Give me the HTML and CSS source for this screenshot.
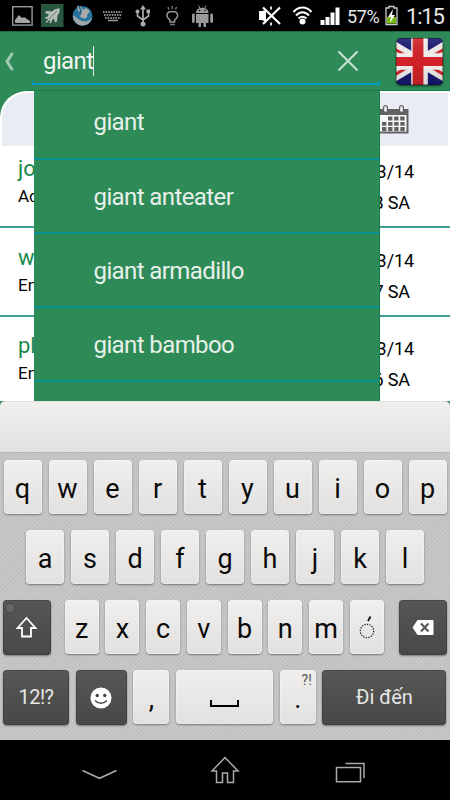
FILE: index.html
```
<!DOCTYPE html>
<html lang="vi">

<head>
    <meta charset="UTF-8" />
    <meta name="viewport" content="width=device-width, initial-scale=1.0" />
    <title>Dictionary</title>
    <link rel="stylesheet" href="styles.css">
</head>

<body>
    <div class="phone">
        <div class="status-bar">
            <svg class="status-left" width="225" height="31" viewBox="0 0 225 31">
                <!-- picture -->
                <rect x="12.7" y="6.7" width="19.4" height="18.4" fill="none" stroke="#999" stroke-width="1.4" />
                <path d="M15 23v-3l4-5 3 3 2-1 6 4v2z" fill="#a5a5a5" />
                <!-- plane -->
                <rect x="41" y="4" width="22.500" height="23" fill="#28573f" />
                <path d="M59.500 8l-5 1.500-2.500 2-6-.5-1 2 4 1.500-3 4 2 .5 2.500 2.500 3.500-3 1 4 2-1 .5-6 2-3z" fill="#b8bdb9" />
                <path d="M45 18.500l2-1.500M46 22.500l3-3M50 23l1.500-2" stroke="#b8bdb9" stroke-width="1.300" />
                <path d="M57 11l-8 8" stroke="#4c6f5b" stroke-width=".8" />
                <!-- globe -->
                <circle cx="82.500" cy="16" r="10" fill="#26749d" />
                <path d="M73 15c0 6 4 10 9 10.500 5 0 9-3 10-8-3 4-7 5-11 3-3-1-5-3-8-5.500z" fill="#a3a7a9" />
                <path d="M77 6c3-1 5 1 6 4l3-2 4 3-3 4c1 3-2 4-5 3-3-2-3-4-1-6l-3-1z" fill="#a9a9a9" />
                <path d="M79 6l2 5-1 4" stroke="#155f89" stroke-width="1.500" fill="none" />
                <!-- keyboard -->
                <path d="M103 12h19M104 15h18M105 18h16" stroke="#888" stroke-width="1.800" stroke-dasharray="1.600 1" />
                <path d="M108 20.500h10" stroke="#999" stroke-width="1.500" />
                <!-- usb -->
                <path d="M143 8v16M137.500 12v4l5.500 4M148.500 13v3l-5.500 4" stroke="#aaa" stroke-width="1.700" fill="none" />
                <path d="M140 9.500l3-4.500 3 4.500z" fill="#aaa" />
                <circle cx="143" cy="24" r="2.500" fill="#aaa" />
                <circle cx="137.500" cy="11.500" r="2" fill="#aaa" />
                <rect x="146.500" y="9.500" width="3.500" height="3.500" fill="#aaa" />
                <!-- bulb -->
                <path d="M170 22v-2c-5-4-3.500-8.500 2.300-8.500s7.300 4.500 2.300 8.500v2z" fill="none" stroke="#999" stroke-width="1.500" />
                <path d="M170 24.500h5M172.300 6v3M168 7l1 2.500M176.500 7l-1 2.500" stroke="#777" stroke-width="1.400" />
                <!-- android -->
                <path d="M196 13c0-7 12.500-7 12.500 0z" fill="#999" />
                <path d="M198.500 5.500l1.500 3M206 5.500l-1.500 3" stroke="#999" />
                <path d="M196 14h12.500v9H206v4h-2.500v-4h-2.500v4h-2.500v-4H196z" fill="#999" />
                <path d="M193.400 15v6.500M211.600 15v6.500" stroke="#999" stroke-width="2.800" stroke-linecap="round" />
                <circle cx="199.500" cy="10.500" r=".8" />
                <circle cx="205" cy="10.500" r=".8" />
            </svg>
            <div class="status-right">
                <svg width="84" height="31" viewBox="0 0 84 31">
                    <!-- muted speaker -->
                    <path d="M1 11h3l4-1v12l-4-2H1z" fill="#fff" />
                    <path d="M13 6.500v19" stroke="#ddd" stroke-width="2" stroke-dasharray="3 13" />
                    <path d="M5 7.500l17 16.500M22 7.500L5 24" stroke="#fff" stroke-width="2.200" />
                    <!-- wifi -->
                    <path d="M35.500 12c5-6 13-6 18 0M38 15.500c4-4.500 9-4.500 13 0M40.500 18.500c3-2.500 5-2.500 8 0" fill="none" stroke="#fff" stroke-width="2" />
                    <circle cx="44.500" cy="21.500" r="3" fill="#fff" />
                    <!-- signal -->
                    <path d="M62.500 20h4v5h-4zM67.500 17h4v8h-4zM72.500 12.500h4V25h-4zM77.500 7.500h4V25h-4z" fill="#fff" />
                </svg>
                <span class="percent">57%</span>
                <svg class="battery" width="13" height="31" viewBox="0 0 13 31">
                    <path d="M4 6.500h5V8h3v16.500H1V8h3z" fill="none" stroke="#ccc" stroke-width="1.300" />
                    <path d="M2 17h9v6.500H2z" fill="#79b913" />
                    <path d="M8 9l-5 8h3l-1 6 5-8H7z" fill="#fff" />
                </svg>
                <span class="clock">1:15</span>
            </div>
        </div>

        <div class="search-bar">
            <svg class="back" width="12" height="20" viewBox="0 0 12 20">
                <path d="M8.500 1L3 9.500l5.500 8.500" fill="none" stroke="#a0ccb3" stroke-width="3" />
            </svg>
            <div class="search-field">
                <span class="query">giant</span>
                <svg class="clear" width="22" height="22" viewBox="0 0 22 22">
                    <path d="M1.500 1.500l19 19M20.500 1.500l-19 19" stroke="#c9e1d3" stroke-width="2" />
                </svg>
            </div>
            <svg class="flag" width="47" height="47" viewBox="0 0 48 48">
                <defs>
                    <clipPath id="flag-clip">
                        <rect width="48" height="48" rx="5" />
                    </clipPath>
                    <linearGradient id="flag-shade" x2="0" y2="1">
                        <stop offset="0" stop-color="#fff" stop-opacity=".12" />
                        <stop offset=".5" stop-color="#000" stop-opacity="0" />
                        <stop offset="1" stop-color="#000" stop-opacity=".12" />
                    </linearGradient>
                </defs>
                <g clip-path="url(#flag-clip)">
                    <rect width="48" height="48" fill="#181872" />
                    <path d="M-8 5l64 38M56 5L-8 43" stroke="#f2eded" stroke-width="10" />
                    <path d="M-2 11l24 14M50 11L26 25M-2 38l24-14M50 38L26 24" stroke="#d3262c" stroke-width="3" />
                    <path d="M24 0v48M0 24h48" stroke="#f5f1f1" stroke-width="17" />
                    <path d="M22.500 0v48" stroke="#d32229" stroke-width="11" />
                    <path d="M0 24h48" stroke="#d32229" stroke-width="9" />
                    <rect width="48" height="48" fill="url(#flag-shade)" />
                    <rect x=".5" y=".5" width="47" height="47" rx="5" fill="none" stroke="#000" stroke-opacity=".35" />
                </g>
            </svg>
        </div>

        <div class="content">
            <div class="panel">
                <div class="panel-head">
                    <svg class="calendar" width="33" height="30" viewBox="0 0 33 30">
                        <path d="M1.500 5h29v22.500h-29z" fill="#f7f7f7" stroke="#626262" stroke-width="2" />
                        <path d="M1 4h30v6H1z" fill="#626262" />
                        <path d="M8.500 2.500v4M24.500 2.500v4" stroke="#626262" stroke-width="5" stroke-linecap="round" />
                        <path d="M8.500 2.500v3M24.500 2.500v3" stroke="#f7f7f7" stroke-width="2.500" stroke-linecap="round" />
                        <path d="M11 13.500h17M5 18.800h23M5 24h23" stroke="#626262" stroke-width="3.800" stroke-dasharray="4.400 1.700" />
                    </svg>
                </div>
                <div class="entry">
                    <div class="word">
                        <b>jo</b>
                        <span>Ad</span>
                    </div>
                    <div class="when">
                        <span>3/14</span>
                        <span class="time">8 SA</span>
                    </div>
                </div>
                <div class="entry">
                    <div class="word">
                        <b>w</b>
                        <span>En</span>
                    </div>
                    <div class="when">
                        <span>3/14</span>
                        <span class="time">7 SA</span>
                    </div>
                </div>
                <div class="entry">
                    <div class="word">
                        <b>pl</b>
                        <span>En</span>
                    </div>
                    <div class="when">
                        <span>3/14</span>
                        <span class="time">6 SA</span>
                    </div>
                </div>
            </div>
            <div class="suggestions">
                <div class="suggestion">giant</div>
                <div class="suggestion">giant anteater</div>
                <div class="suggestion">giant armadillo</div>
                <div class="suggestion">giant bamboo</div>
            </div>
        </div>

        <div class="keyboard">
            <div class="candidates"></div>
            <div class="keys">
                <div class="row row-1">
                    <div class="key">q</div>
                    <div class="key">w</div>
                    <div class="key">e</div>
                    <div class="key">r</div>
                    <div class="key">t</div>
                    <div class="key">y</div>
                    <div class="key">u</div>
                    <div class="key">i</div>
                    <div class="key">o</div>
                    <div class="key">p</div>
                </div>
                <div class="row row-2">
                    <div class="key">a</div>
                    <div class="key">s</div>
                    <div class="key">d</div>
                    <div class="key">f</div>
                    <div class="key">g</div>
                    <div class="key">h</div>
                    <div class="key">j</div>
                    <div class="key">k</div>
                    <div class="key">l</div>
                </div>
                <div class="row row-3">
                    <div class="key dark shift">
                        <svg width="48" height="55" viewBox="0 0 48 55">
                            <circle cx="7" cy="8" r="4.500" fill="#666563" stroke="#484846" />
                            <path d="M23.500 18L14.500 28h4.500v8.500h9V28h4.500z" fill="none" stroke="#fff" stroke-width="1.800" />
                        </svg>
                    </div>
                    <div class="letters">
                        <div class="key">z</div>
                        <div class="key">x</div>
                        <div class="key">c</div>
                        <div class="key">v</div>
                        <div class="key">b</div>
                        <div class="key">n</div>
                        <div class="key">m</div>
                        <div class="key">
                            <svg width="34" height="54" viewBox="0 0 34 54">
                                <circle cx="17" cy="31" r="6.700" fill="none" stroke="#222" stroke-width="1.300" stroke-dasharray="1.300 1.300" />
                                <path d="M18 21l2.500-4.500" stroke="#111" stroke-width="1.800" />
                            </svg>
                        </div>
                    </div>
                    <div class="key dark delete">
                        <svg width="48" height="55" viewBox="0 0 48 55">
                            <path d="M13.500 27.500l5-7.500h15q1 0 1 1v13q0 1-1 1h-15z" fill="#fff" />
                            <path d="M22 23.500l7.500 8M29.500 23.500l-7.500 8" stroke="#555" stroke-width="2" />
                        </svg>
                    </div>
                </div>
                <div class="row row-4">
                    <div class="key dark symbols">12!?</div>
                    <div class="key dark smiley">
                        <svg width="22" height="22" viewBox="0 0 22 22">
                            <circle cx="11" cy="11" r="10.500" fill="#fff" />
                            <circle cx="7.200" cy="8.500" r="1.700" fill="#444" />
                            <circle cx="14.800" cy="8.500" r="1.700" fill="#444" />
                            <path d="M5 13.500q6 5.500 12 0" fill="none" stroke="#444" stroke-width="1.500" />
                        </svg>
                    </div>
                    <div class="key comma">,</div>
                    <div class="key space">
                        <svg width="29" height="8" viewBox="0 0 29 8">
                            <path d="M1 0v6h27V0" fill="none" stroke="#000" stroke-width="2" />
                        </svg>
                    </div>
                    <div class="key period">.<span class="hint">?!</span></div>
                    <div class="key dark go">Đi đến</div>
                </div>
            </div>
        </div>

        <div class="nav-bar">
            <svg width="36" height="12" viewBox="0 0 36 12">
                <path d="M.5 1.500L17.500 9.300l17-7.800" fill="none" stroke="#aaa" stroke-width="1.500" />
            </svg>
            <svg width="30" height="30" viewBox="0 0 30 30">
                <path d="M15 2.500L2 16h4.500v11.500h6V18h5v9.500h6V16H28z" fill="none" stroke="#aaa" stroke-width="1.500" />
            </svg>
            <svg width="30" height="21" viewBox="0 0 30 21">
                <path d="M1.500 5.500h24v14.200h-24zM10.500 1.500H29V16" fill="none" stroke="#aaa" stroke-width="1.500" />
            </svg>
        </div>
    </div>
</body>

</html>
```
FILE: styles.css
```
* {
    padding: 0;
    margin: 0;
    box-sizing: border-box;
    font-family: Roboto, sans-serif;
}

svg {
    display: block;
    flex: none;
}

.phone {
    width: 450px;
    height: 800px;
    background-color: #2e8b57;
    display: flex;
    flex-direction: column;
    overflow: hidden;
}

/* status bar */

.status-bar {
    height: 31px;
    background-color: #000000;
    display: flex;
    justify-content: space-between;
}

.status-right {
    display: flex;
    align-items: center;
    width: 192px;
    color: #e8e8e8;
}

.percent {
    font-size: 18px;
    width: 33px;
    margin-left: 5px;
    letter-spacing: -0.4px;
    margin-top: 2px;
}

.battery {
    margin-left: 5px;
}

.clock {
    font-size: 22px;
    margin-left: 8px;
    margin-top: 2px;
    letter-spacing: -1.2px;
    white-space: nowrap;
}

/* search bar */

.search-bar {
    height: 59px;
    border-top: 1px solid #1f6a40;
    display: flex;
}

.back {
    margin: 20px 20px 0 4px;
}

.search-field {
    width: 348px;
    height: 53px;
    padding: 0 21px 0 12px;
    border-bottom: 2px solid #0099cc;
    margin-left: -4px;
    display: flex;
    align-items: center;
    justify-content: space-between;
    background: linear-gradient(#0099cc, #0099cc) left bottom / 1px 3px no-repeat,
        linear-gradient(#0099cc, #0099cc) right bottom / 1px 3px no-repeat;
}

.query {
    font-size: 24px;
    line-height: 30px;
    color: #f0f5f2;
    border-right: 1.5px solid #e4efe8;
    margin-top: 7px;
    margin-left: -1px;
    letter-spacing: -0.6px;
}

.clear {
    margin-top: 6px;
}

.flag {
    margin: 6px 0 0 16px;
    filter: drop-shadow(0 1px 1px rgba(0, 0, 0, 0.6));
}

/* history list */

.content {
    height: 311px;
    position: relative;
    overflow: hidden;
}

.panel {
    height: 340px;
    background-color: #ffffff;
    border-top: 1px solid #138048;
    border-radius: 27px 0 0 0;
    padding-top: 2px;
}

.panel-head {
    height: 53px;
    margin: 0 2px;
    background-color: #e9edf3;
    border-radius: 25px 0 0 0;
    padding: 12px 0 0 375px;
}

.entry {
    height: 88.500px;
    border-bottom: 2px solid #168a80;
    border-bottom-color: #3f9f97;
    display: flex;
    justify-content: space-between;
    padding: 8px 36px 0 18px;
}

.panel-head + .entry {
    height: 82px;
    padding-top: 9px;
}

.entry:nth-child(3),
.entry:nth-child(4) {
    padding-top: 15.500px;
}

.word {
    display: flex;
    flex-direction: column;
}

.word b {
    font-size: 22px;
    line-height: 28px;
    font-weight: 400;
    color: #15884c;
}

.word span {
    font-size: 17px;
    line-height: 26px;
    color: #000000;
}

.when {
    display: flex;
    flex-direction: column;
    align-items: flex-end;
    font-size: 18px;
    line-height: 31px;
    color: #000000;
    padding-top: 1px;
    letter-spacing: -0.1px;
}

.when .time {
    margin-right: 4px;
}

.suggestions {
    position: absolute;
    top: 1px;
    left: 34px;
    width: 346px;
    height: 310px;
    background-color: #2e8b57;
    border-right: 1px solid #138048;
}

.suggestion {
    height: 74.200px;
    line-height: 75px;
    padding-left: 59.500px;
    font-size: 24px;
    letter-spacing: -0.6px;
    color: #e8f0eb;
    border-bottom: 2px solid #0a9396;
}

.suggestion:first-child {
    height: 68.500px;
    line-height: 63px;
}

/* keyboard */

.keyboard {
    height: 339px;
    background-color: #2e8b57;
}

.candidates {
    height: 52px;
    border-radius: 5px 5px 0 0;
    border-top: 1px solid #dfe0dd;
    border-bottom: 1px solid #b4b4b2;
    background: linear-gradient(#f0efed, #e1e0de);
}

.keys {
    height: 287px;
    padding-top: 7px;
    display: flex;
    flex-direction: column;
    gap: 16px;
    background: repeating-linear-gradient(135deg, #c8c8c8 0, #c8c8c8 1.500px, #c0c0c0 1.500px, #c0c0c0 3px);
}

.row {
    height: 54px;
    display: flex;
    justify-content: space-between;
}

.row-1 {
    padding: 0 3.500px;
}

.row-2 {
    padding: 0 26px;
}

.row-3,
.row-4 {
    padding: 0 3.500px 0 3px;
}

.key {
    width: 38px;
    height: 54px;
    border-radius: 4px;
    background: linear-gradient(#f0efed, #e2e1df);
    box-shadow: 0 1px 2px rgba(0, 0, 0, 0.4), inset 0 0 0 1px rgba(255, 255, 255, 0.25);
    color: #0a0a0a;
    font-size: 27px;
    line-height: 59px;
    text-align: center;
}

.letters {
    width: 319px;
    margin-left: -1px;
    display: flex;
    justify-content: space-between;
}

.letters .key {
    width: 34px;
}

.key.dark {
    height: 55px;
    background: linear-gradient(#575654, #484848);
    box-shadow: 0 1px 2px rgba(0, 0, 0, 0.4), inset 0 0 0 1px rgba(0, 0, 0, 0.15);
    color: #e6e6e6;
    font-size: 20px;
    line-height: 55px;
}

.shift,
.delete {
    width: 48px;
}

.key.symbols {
    width: 66px;
    letter-spacing: -0.5px;
}

.smiley {
    width: 51px;
    display: flex;
    align-items: center;
    justify-content: center;
}

.comma {
    width: 36px;
}

.space {
    width: 97px;
    display: flex;
    justify-content: center;
    padding-top: 30px;
}

.period {
    width: 36px;
    position: relative;
}

.hint {
    position: absolute;
    top: 2px;
    right: 4px;
    font-size: 14px;
    line-height: 16px;
    color: #555555;
}

.go {
    width: 124px;
}

/* navigation bar */

.nav-bar {
    height: 60px;
    background-color: #000000;
    display: flex;
    justify-content: space-between;
    padding: 0 85px 0 82px;
}

.nav-bar svg:nth-child(1) {
    margin-top: 29px;
}

.nav-bar svg:nth-child(2) {
    margin: 15px 4px 0 0;
}

.nav-bar svg:nth-child(3) {
    margin-top: 22px;
}
```
